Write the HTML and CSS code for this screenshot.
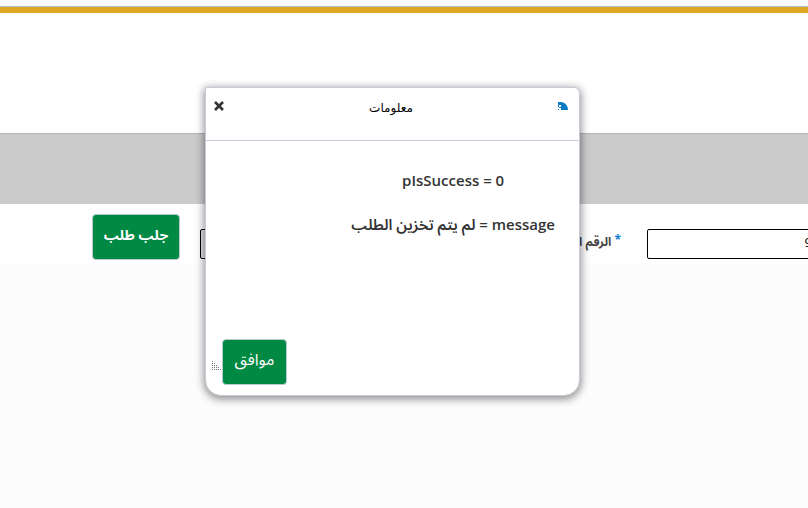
FILE: index.html
```html
<!DOCTYPE html>
<html lang="ar" dir="rtl">
<head>
    <meta charset="UTF-8">
    <meta name="viewport" content="width=device-width, initial-scale=1.0">
    <title>معلومات</title>
    <link rel="stylesheet" href="styles.css">
</head>
<body>
    <header class="top"></header>
    <div class="band"></div>
    <form class="search">
        <input class="field number" type="text" id="number" value="9">
        <label for="result"><span class="star">*</span> الرقم ا</label>
        <input class="field result" type="text" id="result" disabled>
        <button class="green fetch" type="button">جلب طلب</button>
    </form>

    <div class="dialog" role="dialog" aria-labelledby="title">
        <div class="dialog-head">
            <svg class="mark" viewBox="0 0 10 8" aria-hidden="true">
                <path d="M0 0h3c4 0 7 4 7 8H0z" fill="#0a7cc4"/>
                <path d="M1 3h2v2H1zM0 5h1v2H0zM1 6h2v2H1z" fill="#fff"/>
            </svg>
            <h1 id="title">معلومات</h1>
            <button class="close" type="button" aria-label="إغلاق">
                <svg viewBox="0 0 10 10"><path d="M1 1l8 8M9 1L1 9" stroke="#333" stroke-width="2.6"/></svg>
            </button>
        </div>
        <div class="dialog-body">
            <p dir="ltr">pIsSuccess = 0</p>
            <p>message = لم يتم تخزين الطلب</p>
        </div>
        <div class="dialog-foot">
            <button class="green ok" type="button">موافق</button>
            <svg class="grip" viewBox="0 0 10 10" aria-hidden="true">
                <path d="M0 .5h1M0 2.5h3M0 4.5h5M0 6.5h7M0 8.5h9" stroke="#777784" stroke-dasharray="1 1"/>
            </svg>
        </div>
    </div>
</body>
</html>
```

FILE: styles.css
```css
* {
    box-sizing: border-box;
}
body {
    margin: 0;
    padding-top: 6px;
    min-height: 100vh;
    overflow: hidden;
    font-family: "Open Sans", "Noto Sans Arabic", "DejaVu Sans", sans-serif;
    color: #333;
    background-color: #fcfcfc;
}
.top {
    height: 127px;
    border-top: 1px solid #b5bec4;
    background: linear-gradient(#dfa822 6px, #fff 6px);
}
.band {
    height: 71px;
    border-top: 1px solid #b4b4b4;
    background-color: #cbcbcb;
}
.search {
    display: flex;
    align-items: center;
    height: 60px;
    padding-top: 6px;
    background-color: #fefefe;
}
.field {
    height: 30px;
    border: 1px solid #000;
    border-radius: 2px;
    font-family: inherit;
    font-size: 13px;
}
.number {
    flex: none;
    width: 182px;
    margin: 14px -21px 0 0;
    padding: 0 16px 4px;
    background-color: #fff;
}
label {
    flex: none;
    margin: 10px 26px 0 0;
    font-size: 12px;
    font-weight: bold;
    color: #444;
}
.star {
    color: #0a7cd0;
    vertical-align: 2px;
}
.result {
    flex: 1;
    min-width: 0;
    margin: 14px 20px 0 20px;
    background-color: #e0e0e6;
}
.green {
    height: 46px;
    border: 1px solid #b9c9d0;
    border-radius: 4px;
    background-color: #008943;
    color: #fff;
    font-family: inherit;
    font-size: 16px;
    cursor: pointer;
}
.fetch {
    flex: none;
    width: 88px;
    margin-left: 92px;
    padding: 0 0 4px;
    font-size: 14px;
    font-weight: bold;
}
.dialog {
    position: absolute;
    top: 87px;
    left: 205px;
    display: flex;
    flex-direction: column;
    width: 375px;
    min-height: 309px;
    border: 1px solid #c8c8d6;
    border-radius: 2px 6px 16px 16px;
    background-color: #fff;
    box-shadow: 0 2px 9px 1px rgba(0, 0, 0, 0.45);
}
.dialog-head {
    display: flex;
    align-items: flex-start;
    justify-content: space-between;
    height: 53px;
    padding: 11px 11px 0 8px;
    border-bottom: 1px solid #c8c8d6;
}
.mark {
    width: 10px;
    height: 8px;
    margin-top: 3px;
}
h1 {
    margin: 0;
    font-family: "Liberation Sans", "DejaVu Sans", sans-serif;
    font-size: 12px;
    font-weight: normal;
    line-height: 18px;
    color: #000;
}
.close {
    padding: 2px 0;
    border: none;
    background: none;
    cursor: pointer;
}
.close svg {
    display: block;
    width: 10px;
    height: 10px;
}
.dialog-body {
    flex: 1;
    align-self: flex-start;
    padding: 28px 24px 0;
    text-align: center;
    font-size: 15px;
    font-weight: 600;
    line-height: 22px;
}
.dialog-body p {
    margin: 0 0 22px;
}
.dialog-foot {
    display: flex;
    align-items: center;
    justify-content: flex-end;
    padding: 0 0 10px 6px;
}
.ok {
    width: 65px;
    padding: 0 0 4px;
}
.grip {
    width: 10px;
    height: 10px;
    margin-top: 8px;
}
```
